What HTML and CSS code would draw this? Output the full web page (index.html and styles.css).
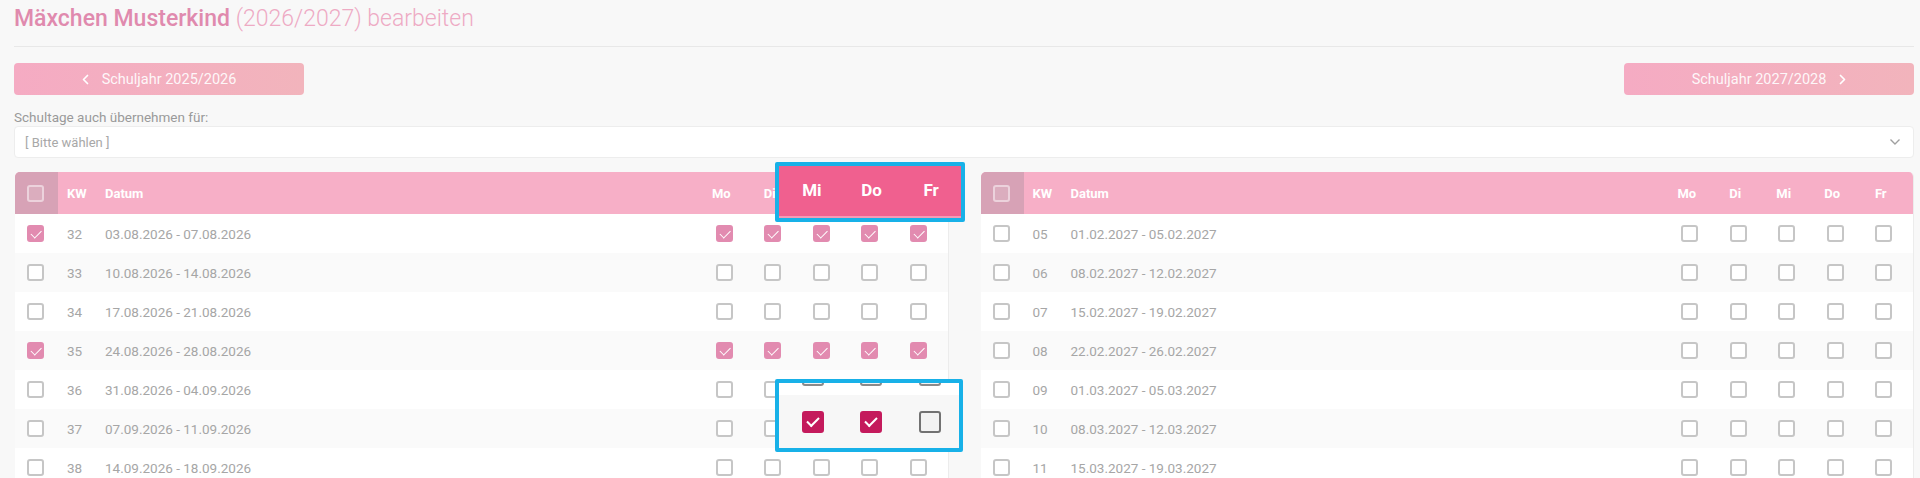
FILE: index.html
```html
<!DOCTYPE html>
<html lang="de">
<head>
  <meta charset="UTF-8" />
  <title>Mäxchen Musterkind bearbeiten</title>
  <link rel="stylesheet" href="styles.css">
</head>
<body>
  <div class="page">
    <div class="title-bar">
      <h1 class="title"><span class="title-name">Mäxchen Musterkind</span> <span class="title-rest">(2026/2027) bearbeiten</span></h1>
    </div>

    <div class="year-nav">
      <button class="year-btn">
        <svg class="chev" width="7" height="11" viewBox="0 0 7 11"><polyline points="5.5,1.5 1.5,5.5 5.5,9.5" /></svg>
        <span>Schuljahr 2025/2026</span>
      </button>
      <button class="year-btn">
        <span>Schuljahr 2027/2028</span>
        <svg class="chev" width="7" height="11" viewBox="0 0 7 11"><polyline points="1.5,1.5 5.5,5.5 1.5,9.5" /></svg>
      </button>
    </div>

    <label class="field-label">Schultage auch übernehmen für:</label>
    <div class="select">
      <span>[ Bitte wählen ]</span>
      <svg class="select-arrow" width="12" height="8" viewBox="0 0 12 8"><polyline points="1.5,1.5 6,6 10.5,1.5" /></svg>
    </div>

    <div class="tables">
      <div class="week-table">
        <div class="wk-head">
          <div class="col-check"><span class="cb cb-head"></span></div>
          <div class="col-kw">KW</div>
          <div class="col-date">Datum</div>
          <div class="col-day">Mo</div>
          <div class="col-day">Di</div>
          <div class="col-day">Mi</div>
          <div class="col-day">Do</div>
          <div class="col-day">Fr</div>
        </div>
        <div class="wk-row">
          <div class="col-check"><span class="cb on"></span></div>
          <div class="col-kw">32</div>
          <div class="col-date">03.08.2026 - 07.08.2026</div>
          <div class="col-day"><span class="cb on"></span></div>
          <div class="col-day"><span class="cb on"></span></div>
          <div class="col-day"><span class="cb on"></span></div>
          <div class="col-day"><span class="cb on"></span></div>
          <div class="col-day"><span class="cb on"></span></div>
        </div>
        <div class="wk-row">
          <div class="col-check"><span class="cb"></span></div>
          <div class="col-kw">33</div>
          <div class="col-date">10.08.2026 - 14.08.2026</div>
          <div class="col-day"><span class="cb"></span></div>
          <div class="col-day"><span class="cb"></span></div>
          <div class="col-day"><span class="cb"></span></div>
          <div class="col-day"><span class="cb"></span></div>
          <div class="col-day"><span class="cb"></span></div>
        </div>
        <div class="wk-row">
          <div class="col-check"><span class="cb"></span></div>
          <div class="col-kw">34</div>
          <div class="col-date">17.08.2026 - 21.08.2026</div>
          <div class="col-day"><span class="cb"></span></div>
          <div class="col-day"><span class="cb"></span></div>
          <div class="col-day"><span class="cb"></span></div>
          <div class="col-day"><span class="cb"></span></div>
          <div class="col-day"><span class="cb"></span></div>
        </div>
        <div class="wk-row">
          <div class="col-check"><span class="cb on"></span></div>
          <div class="col-kw">35</div>
          <div class="col-date">24.08.2026 - 28.08.2026</div>
          <div class="col-day"><span class="cb on"></span></div>
          <div class="col-day"><span class="cb on"></span></div>
          <div class="col-day"><span class="cb on"></span></div>
          <div class="col-day"><span class="cb on"></span></div>
          <div class="col-day"><span class="cb on"></span></div>
        </div>
        <div class="wk-row">
          <div class="col-check"><span class="cb"></span></div>
          <div class="col-kw">36</div>
          <div class="col-date">31.08.2026 - 04.09.2026</div>
          <div class="col-day"><span class="cb"></span></div>
          <div class="col-day"><span class="cb"></span></div>
          <div class="col-day"><span class="cb"></span></div>
          <div class="col-day"><span class="cb"></span></div>
          <div class="col-day"><span class="cb"></span></div>
        </div>
        <div class="wk-row">
          <div class="col-check"><span class="cb"></span></div>
          <div class="col-kw">37</div>
          <div class="col-date">07.09.2026 - 11.09.2026</div>
          <div class="col-day"><span class="cb"></span></div>
          <div class="col-day"><span class="cb"></span></div>
          <div class="col-day"><span class="cb"></span></div>
          <div class="col-day"><span class="cb"></span></div>
          <div class="col-day"><span class="cb"></span></div>
        </div>
        <div class="wk-row">
          <div class="col-check"><span class="cb"></span></div>
          <div class="col-kw">38</div>
          <div class="col-date">14.09.2026 - 18.09.2026</div>
          <div class="col-day"><span class="cb"></span></div>
          <div class="col-day"><span class="cb"></span></div>
          <div class="col-day"><span class="cb"></span></div>
          <div class="col-day"><span class="cb"></span></div>
          <div class="col-day"><span class="cb"></span></div>
        </div>
      </div>

      <div class="week-table">
        <div class="wk-head">
          <div class="col-check"><span class="cb cb-head"></span></div>
          <div class="col-kw">KW</div>
          <div class="col-date">Datum</div>
          <div class="col-day">Mo</div>
          <div class="col-day">Di</div>
          <div class="col-day">Mi</div>
          <div class="col-day">Do</div>
          <div class="col-day">Fr</div>
        </div>
        <div class="wk-row">
          <div class="col-check"><span class="cb"></span></div>
          <div class="col-kw">05</div>
          <div class="col-date">01.02.2027 - 05.02.2027</div>
          <div class="col-day"><span class="cb"></span></div>
          <div class="col-day"><span class="cb"></span></div>
          <div class="col-day"><span class="cb"></span></div>
          <div class="col-day"><span class="cb"></span></div>
          <div class="col-day"><span class="cb"></span></div>
        </div>
        <div class="wk-row">
          <div class="col-check"><span class="cb"></span></div>
          <div class="col-kw">06</div>
          <div class="col-date">08.02.2027 - 12.02.2027</div>
          <div class="col-day"><span class="cb"></span></div>
          <div class="col-day"><span class="cb"></span></div>
          <div class="col-day"><span class="cb"></span></div>
          <div class="col-day"><span class="cb"></span></div>
          <div class="col-day"><span class="cb"></span></div>
        </div>
        <div class="wk-row">
          <div class="col-check"><span class="cb"></span></div>
          <div class="col-kw">07</div>
          <div class="col-date">15.02.2027 - 19.02.2027</div>
          <div class="col-day"><span class="cb"></span></div>
          <div class="col-day"><span class="cb"></span></div>
          <div class="col-day"><span class="cb"></span></div>
          <div class="col-day"><span class="cb"></span></div>
          <div class="col-day"><span class="cb"></span></div>
        </div>
        <div class="wk-row">
          <div class="col-check"><span class="cb"></span></div>
          <div class="col-kw">08</div>
          <div class="col-date">22.02.2027 - 26.02.2027</div>
          <div class="col-day"><span class="cb"></span></div>
          <div class="col-day"><span class="cb"></span></div>
          <div class="col-day"><span class="cb"></span></div>
          <div class="col-day"><span class="cb"></span></div>
          <div class="col-day"><span class="cb"></span></div>
        </div>
        <div class="wk-row">
          <div class="col-check"><span class="cb"></span></div>
          <div class="col-kw">09</div>
          <div class="col-date">01.03.2027 - 05.03.2027</div>
          <div class="col-day"><span class="cb"></span></div>
          <div class="col-day"><span class="cb"></span></div>
          <div class="col-day"><span class="cb"></span></div>
          <div class="col-day"><span class="cb"></span></div>
          <div class="col-day"><span class="cb"></span></div>
        </div>
        <div class="wk-row">
          <div class="col-check"><span class="cb"></span></div>
          <div class="col-kw">10</div>
          <div class="col-date">08.03.2027 - 12.03.2027</div>
          <div class="col-day"><span class="cb"></span></div>
          <div class="col-day"><span class="cb"></span></div>
          <div class="col-day"><span class="cb"></span></div>
          <div class="col-day"><span class="cb"></span></div>
          <div class="col-day"><span class="cb"></span></div>
        </div>
        <div class="wk-row">
          <div class="col-check"><span class="cb"></span></div>
          <div class="col-kw">11</div>
          <div class="col-date">15.03.2027 - 19.03.2027</div>
          <div class="col-day"><span class="cb"></span></div>
          <div class="col-day"><span class="cb"></span></div>
          <div class="col-day"><span class="cb"></span></div>
          <div class="col-day"><span class="cb"></span></div>
          <div class="col-day"><span class="cb"></span></div>
        </div>
      </div>

      <!-- highlight callouts (zoomed view over the left table) -->
      <div class="callout callout-head">
        <div class="callout-cols">
          <div class="callout-col">Mi</div>
          <div class="callout-col">Do</div>
          <div class="callout-col">Fr</div>
        </div>
      </div>
      <div class="callout callout-row">
        <div class="callout-strip">
          <div class="callout-col"><span class="cb cb-big cb-peek"></span></div>
          <div class="callout-col"><span class="cb cb-big cb-peek"></span></div>
          <div class="callout-col"><span class="cb cb-big cb-peek"></span></div>
        </div>
        <div class="callout-cols callout-boxes">
          <div class="callout-col"><span class="cb cb-big on"></span></div>
          <div class="callout-col"><span class="cb cb-big on"></span></div>
          <div class="callout-col"><span class="cb cb-big"></span></div>
        </div>
      </div>
    </div>
  </div>
</body>
</html>
```

FILE: styles.css
```css
* {
  box-sizing: border-box;
  margin: 0;
  padding: 0;
}

html,
body {
  overflow: hidden;
}

body {
  background-color: #f8f8f8;
  font-family: Roboto, 'Liberation Sans', sans-serif;
  color: #a6a6a6;
}

.page {
  padding: 6px 6px 0 14px;
}

/* title */

.title-bar {
  padding-bottom: 14px;
  border-bottom: 1px solid #e8e8e8;
}

.title {
  font-size: 23px;
  line-height: 26px;
  font-weight: 400;
}

.title-name {
  color: #e08aae;
  font-weight: 500;
}

.title-rest {
  color: #eeaac4;
  font-weight: 300;
}

/* year buttons */

.year-nav {
  display: flex;
  justify-content: space-between;
  margin-top: 16px;
}

.year-btn {
  width: 290px;
  height: 32px;
  border: none;
  border-radius: 4px;
  background: linear-gradient(90deg, #f5abc3, #f2b4bc);
  color: rgba(255, 255, 255, 0.92);
  font-family: inherit;
  font-size: 14.5px;
  display: flex;
  align-items: center;
  justify-content: center;
  gap: 13px;
}

.chev polyline {
  fill: none;
  stroke: #fff;
  stroke-width: 1.7;
  stroke-linecap: round;
  stroke-linejoin: round;
}

/* select */

.field-label {
  display: block;
  margin-top: 14px;
  font-size: 13.5px;
  line-height: 16px;
  color: #9a9a9a;
}

.select {
  margin-top: 1px;
  height: 32px;
  background-color: #fff;
  border: 1px solid #ededed;
  border-radius: 4px;
  display: flex;
  align-items: center;
  justify-content: space-between;
  padding: 0 12px 0 10px;
  font-size: 13px;
  color: #a8a8a8;
}

.select-arrow polyline {
  fill: none;
  stroke: #a0a0a0;
  stroke-width: 1.4;
}

/* week tables */

.tables {
  position: relative;
  margin-top: 14px;
  display: grid;
  grid-template-columns: 1fr 1fr;
  gap: 32px;
  padding-left: 1px;
}

.week-table {
  background-color: #fff;
  border-radius: 5px 5px 0 0;
  border-right: 1px solid #ececec;
  overflow: hidden;
}

.wk-head,
.wk-row {
  display: grid;
  grid-template-columns: 43px 38px 1fr repeat(5, 48.5px);
  align-items: center;
  padding-right: 5px;
}

.wk-head {
  height: 42px;
  background-color: #f7afc7;
  color: #fff;
  font-size: 13px;
  font-weight: 700;
}

.wk-head .col-check {
  height: 100%;
  background-color: #d7a2b6;
}

.wk-head .col-day {
  padding-right: 6px;
}

.wk-row {
  height: 39px;
  font-size: 13.5px;
}

.wk-row:nth-child(odd) {
  background-color: #fafafa;
}

.col-check {
  display: flex;
  align-items: center;
  padding-left: 12px;
}

.col-kw,
.col-date {
  padding-left: 9px;
}

.col-day {
  display: flex;
  justify-content: center;
}

/* checkboxes */

.cb {
  position: relative;
  display: inline-block;
  width: 17px;
  height: 17px;
  border: 2px solid #c6c6c6;
  border-radius: 3px;
  background-color: #fff;
}

.cb.on {
  border-color: #e28bb0;
  background-color: #e28bb0;
}

.cb.on::after {
  content: "";
  position: absolute;
  left: 2px;
  top: 2.5px;
  width: 9px;
  height: 4.5px;
  border-left: 1.7px solid #fff;
  border-bottom: 1.7px solid #fff;
  transform: rotate(-45deg);
}

.cb-head {
  border-color: rgba(255, 255, 255, 0.45);
  background-color: rgba(255, 255, 255, 0.12);
}

/* callouts */

.callout {
  position: absolute;
  left: 761px;
  border: 4px solid #18b1e8;
  border-radius: 2px;
  overflow: hidden;
}

.callout-head {
  top: -10px;
  width: 190px;
  height: 60px;
  background-color: #f0608f;
  box-shadow: inset 0 -2px 0 #f49ab6;
}

.callout-cols {
  display: flex;
  padding-left: 3px;
}

.callout-col {
  width: 60px;
  display: flex;
  justify-content: center;
  align-items: center;
}

.callout-head .callout-cols {
  height: 100%;
  padding-bottom: 4px;
  color: #fff;
  font-size: 17px;
  font-weight: 700;
}

.callout-row {
  top: 207px;
  width: 188px;
  height: 73px;
  background-color: #f7f7f7;
}

.callout-strip {
  display: flex;
  padding-left: 5px;
  height: 12px;
  align-items: flex-start;
  background-color: #fff;
  overflow: hidden;
}

.callout-boxes {
  padding-left: 5px;
  height: 53px;
}

.cb-big {
  width: 22px;
  height: 22px;
  border: 2.5px solid #727272;
  background-color: #f3f3f3;
}

.cb-peek {
  margin-top: -19px;
  border-color: #8a8a8a;
}

.cb-big.on {
  border-color: #c41a5c;
  background-color: #c41a5c;
}

.cb-big.on::after {
  left: 3px;
  top: 4px;
  width: 10px;
  height: 5px;
  border-left-width: 2px;
  border-bottom-width: 2px;
}
```
